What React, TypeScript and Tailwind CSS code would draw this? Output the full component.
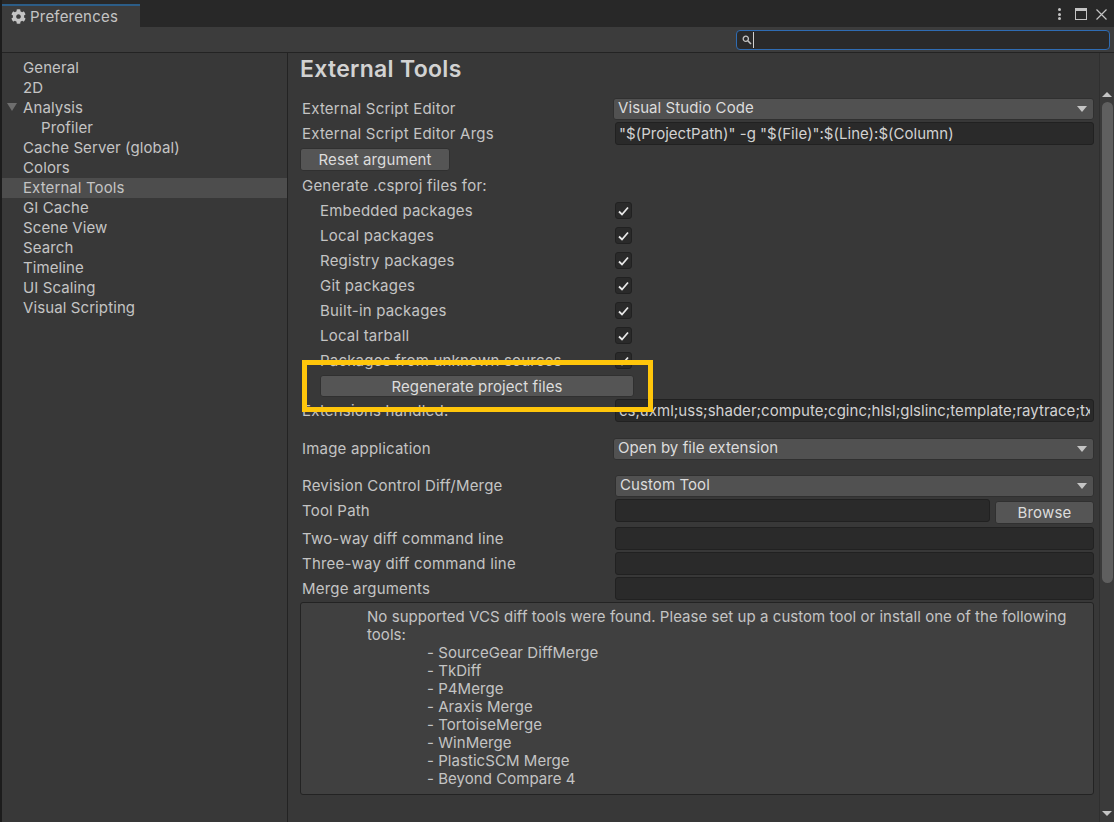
import { FaCog } from 'react-icons/fa'
import type { ReactNode } from 'react'

const navItems = [
  { label: 'General' },
  { label: '2D' },
  { label: 'Analysis', open: true },
  { label: 'Profiler', child: true },
  { label: 'Cache Server (global)' },
  { label: 'Colors' },
  { label: 'External Tools', active: true },
  { label: 'GI Cache' },
  { label: 'Scene View' },
  { label: 'Search' },
  { label: 'Timeline' },
  { label: 'UI Scaling' },
  { label: 'Visual Scripting' },
]

const packages = [
  'Embedded packages',
  'Local packages',
  'Registry packages',
  'Git packages',
  'Built-in packages',
  'Local tarball',
  'Packages from unknown sources',
]

const diffTools = [
  'SourceGear DiffMerge',
  'TkDiff',
  'P4Merge',
  'Araxis Merge',
  'TortoiseMerge',
  'WinMerge',
  'PlasticSCM Merge',
  'Beyond Compare 4',
]

const Row = ({ label, indent, children }: { label?: string; indent?: boolean; children?: ReactNode }) => {
  return (
    <div className="flex h-[25px] items-center">
      <div className={indent ? 'w-[311px] pl-[18px] whitespace-nowrap' : 'w-[311px] whitespace-nowrap'}>{label}</div>
      <div className="flex min-w-0 flex-1 items-center">{children}</div>
    </div>
  )
}

const Dropdown = ({ value, inset }: { value: string; inset?: boolean }) => {
  return (
    <div
      className={`flex h-[22px] flex-1 items-center justify-between rounded-[3px] border border-[#303030] bg-[#515151] pr-[6px] tracking-[0.08px] text-[#dcdcdc] ${
        inset ? 'ml-[2px] pl-[4px]' : 'pl-[4px]'
      }`}
    >
      <span className="-mt-[2px]">{value}</span>
      <span className="h-0 w-0 border-x-[5px] border-t-[6px] border-x-transparent border-t-[#c4c4c4]" />
    </div>
  )
}

const Field = ({ value }: { value?: string }) => {
  return (
    <div className="ml-[2px] flex h-[23px] min-w-0 flex-1 items-center rounded-[3px] border border-[#212121] bg-[#2a2a2a] px-[3px] text-[#d2d2d2]">
      <span className="min-w-0 overflow-hidden leading-[19px] tracking-[0.02px] whitespace-nowrap">{value}</span>
    </div>
  )
}

const Checkbox = () => {
  return (
    <div className="ml-[2px] flex h-[17px] w-[17px] items-center justify-center rounded-[3px] border border-[#212121] bg-[#2a2a2a]">
      <svg width="11" height="10" viewBox="0 0 11 10" fill="none">
        <path d="M1 5.5 L4 8.5 L10 1.5" stroke="#e8e8e8" strokeWidth="1.8" />
      </svg>
    </div>
  )
}

export default function App() {
  return (
    <div className="flex h-[822px] w-[1114px] overflow-hidden bg-[#1c1c1c] font-['Inter',sans-serif] text-[15px] leading-none tracking-[0.2px] text-[#c4c4c4]">
      <div className="flex w-full flex-col pl-[2px]">
        <div className="flex h-[27px] items-start justify-between bg-[#282828] pt-[4px]">
          <div className="flex h-[23px] w-[138px] items-center gap-[4px] border-t-2 border-[#2c5d87] bg-[#3c3c3c] pl-[9px]">
            <FaCog size={15} color="#c4c4c4" />
            <span>Preferences</span>
          </div>
          <div className="flex items-center gap-[9px] pt-[4px] pr-[7px]">
            <div className="mr-[5px] flex flex-col gap-[1.5px]">
              <span className="h-[3px] w-[3px] rounded-full bg-[#c4c4c4]" />
              <span className="h-[3px] w-[3px] rounded-full bg-[#c4c4c4]" />
              <span className="h-[3px] w-[3px] rounded-full bg-[#c4c4c4]" />
            </div>
            <div className="h-[12px] w-[12px] border border-t-[3px] border-[#c4c4c4]" />
            <svg width="11" height="11" viewBox="0 0 11 11" fill="none">
              <path d="M0.5 0.5 L10.5 10.5 M10.5 0.5 L0.5 10.5" stroke="#c4c4c4" strokeWidth="1.2" />
            </svg>
          </div>
        </div>

        <div className="flex h-[26px] items-center justify-end border-b border-[#232323] bg-[#3c3c3c] pr-[4px]">
          <div className="flex h-[20px] w-[374px] items-center rounded-[4px] border border-[#2f6cb3] bg-[#2a2a2a] pl-[5px]">
            <svg width="10" height="10" viewBox="0 0 10 10" fill="none">
              <circle cx="3.8" cy="3.8" r="2.6" stroke="#c4c4c4" strokeWidth="1.3" />
              <path d="M5.8 5.8 L9 9" stroke="#c4c4c4" strokeWidth="1.6" />
            </svg>
            <span className="ml-[1px] h-[16px] w-px bg-[#d0d0d0]" />
          </div>
        </div>

        <div className="flex min-h-0 flex-1">
          <div className="w-[286px] border-r border-[#232323] bg-[#383838] pt-[5px] tracking-[0.1px]">
            {navItems.map((item) => (
              <div
                key={item.label}
                className={`relative flex h-[20px] items-center pb-[2px] ${item.child ? 'pl-[39px]' : 'pl-[21px]'} ${
                  item.active ? 'bg-[#4d4d4d]' : ''
                }`}
              >
                {item.open && (
                  <span className="absolute left-[5px] h-0 w-0 border-x-[5px] border-t-[8px] border-x-transparent border-t-[#6e6e6e]" />
                )}
                {item.label}
              </div>
            ))}
          </div>

          <div className="flex min-w-0 flex-1 bg-[#383838]">
            <div className="min-w-0 flex-1 pr-[5px] pl-[14px]">
              <h1 className="-ml-[2px] flex h-[31px] items-center pt-[1px] text-[23px] font-semibold tracking-[0.3px] text-[#d2d2d2]">
                External Tools
              </h1>
              <div className="mt-[12px]">
                <Row label="External Script Editor">
                  <Dropdown value="Visual Studio Code" />
                </Row>
                <Row label="External Script Editor Args">
                  <Field value={'"$(ProjectPath)" -g "$(File)":$(Line):$(Column)'} />
                </Row>
                <div className="flex h-[27px] items-center">
                  <button className="-ml-[2px] h-[23px] w-[150px] rounded-[3px] border border-[#303030] bg-[#555555] tracking-[0.1px] text-[#dcdcdc]">
                    Reset argument
                  </button>
                </div>
                <Row label="Generate .csproj files for:" />
                {packages.map((name) => (
                  <Row key={name} label={name} indent>
                    <Checkbox />
                  </Row>
                ))}
                <div className="flex h-[25px] items-center pt-[1px] pl-[18px]">
                  <button className="h-[22px] w-[314px] rounded-[3px] border border-[#303030] bg-[#555555] tracking-[0.1px] text-[#dcdcdc]">
                    Regenerate project files
                  </button>
                </div>
                <Row label="Extensions handled:">
                  <Field value="cs,uxml;uss;shader;compute;cginc;hlsl;glslinc;template;raytrace;txt;json;asmdef" />
                </Row>
                <div className="mt-[13px]">
                  <Row label="Image application">
                    <Dropdown value="Open by file extension" />
                  </Row>
                </div>
                <div className="mt-[12px]">
                  <Row label="Revision Control Diff/Merge">
                    <Dropdown value="Custom Tool" inset />
                  </Row>
                </div>
                <Row label="Tool Path">
                  <Field />
                  <button className="mt-[3px] ml-[5px] h-[23px] w-[99px] rounded-[3px] border border-[#303030] bg-[#555555] text-[#dcdcdc]">
                    Browse
                  </button>
                </Row>
                <div className="mt-[3px]">
                  <Row label="Two-way diff command line">
                    <Field />
                  </Row>
                  <Row label="Three-way diff command line">
                    <Field />
                  </Row>
                  <Row label="Merge arguments">
                    <Field />
                  </Row>
                </div>
                <div className="-ml-[2px] mt-[1px] h-[193px] rounded-[3px] border border-[#232323] bg-[#404040] pt-[5px] pl-[66px] leading-[18px] tracking-[0.05px] text-[#c4c4c4]">
                  <p className="pr-[20px]">
                    No supported VCS diff tools were found. Please set up a custom tool or install one of the following
                    tools:
                  </p>
                  <ul className="pl-[60px]">
                    {diffTools.map((tool) => (
                      <li key={tool}>- {tool}</li>
                    ))}
                  </ul>
                </div>
              </div>
            </div>

            <div className="flex w-[15px] flex-col items-center border-l border-[#2f2f2f] bg-[#3a3a3a] pt-[39px] pb-[6px]">
              <span className="h-0 w-0 border-x-[5px] border-b-[5px] border-x-transparent border-b-[#c4c4c4]" />
              <div className="mt-[5px] h-[481px] w-[11px] rounded-full bg-[#5f5f5f]" />
              <span className="mt-auto h-0 w-0 border-x-[5px] border-t-[5px] border-x-transparent border-t-[#c4c4c4]" />
            </div>
          </div>
        </div>
      </div>

      <div className="pointer-events-none absolute top-[360px] left-[302px] h-[52px] w-[351px] border-[5px] border-[#ffc60b]" />
    </div>
  )
}
